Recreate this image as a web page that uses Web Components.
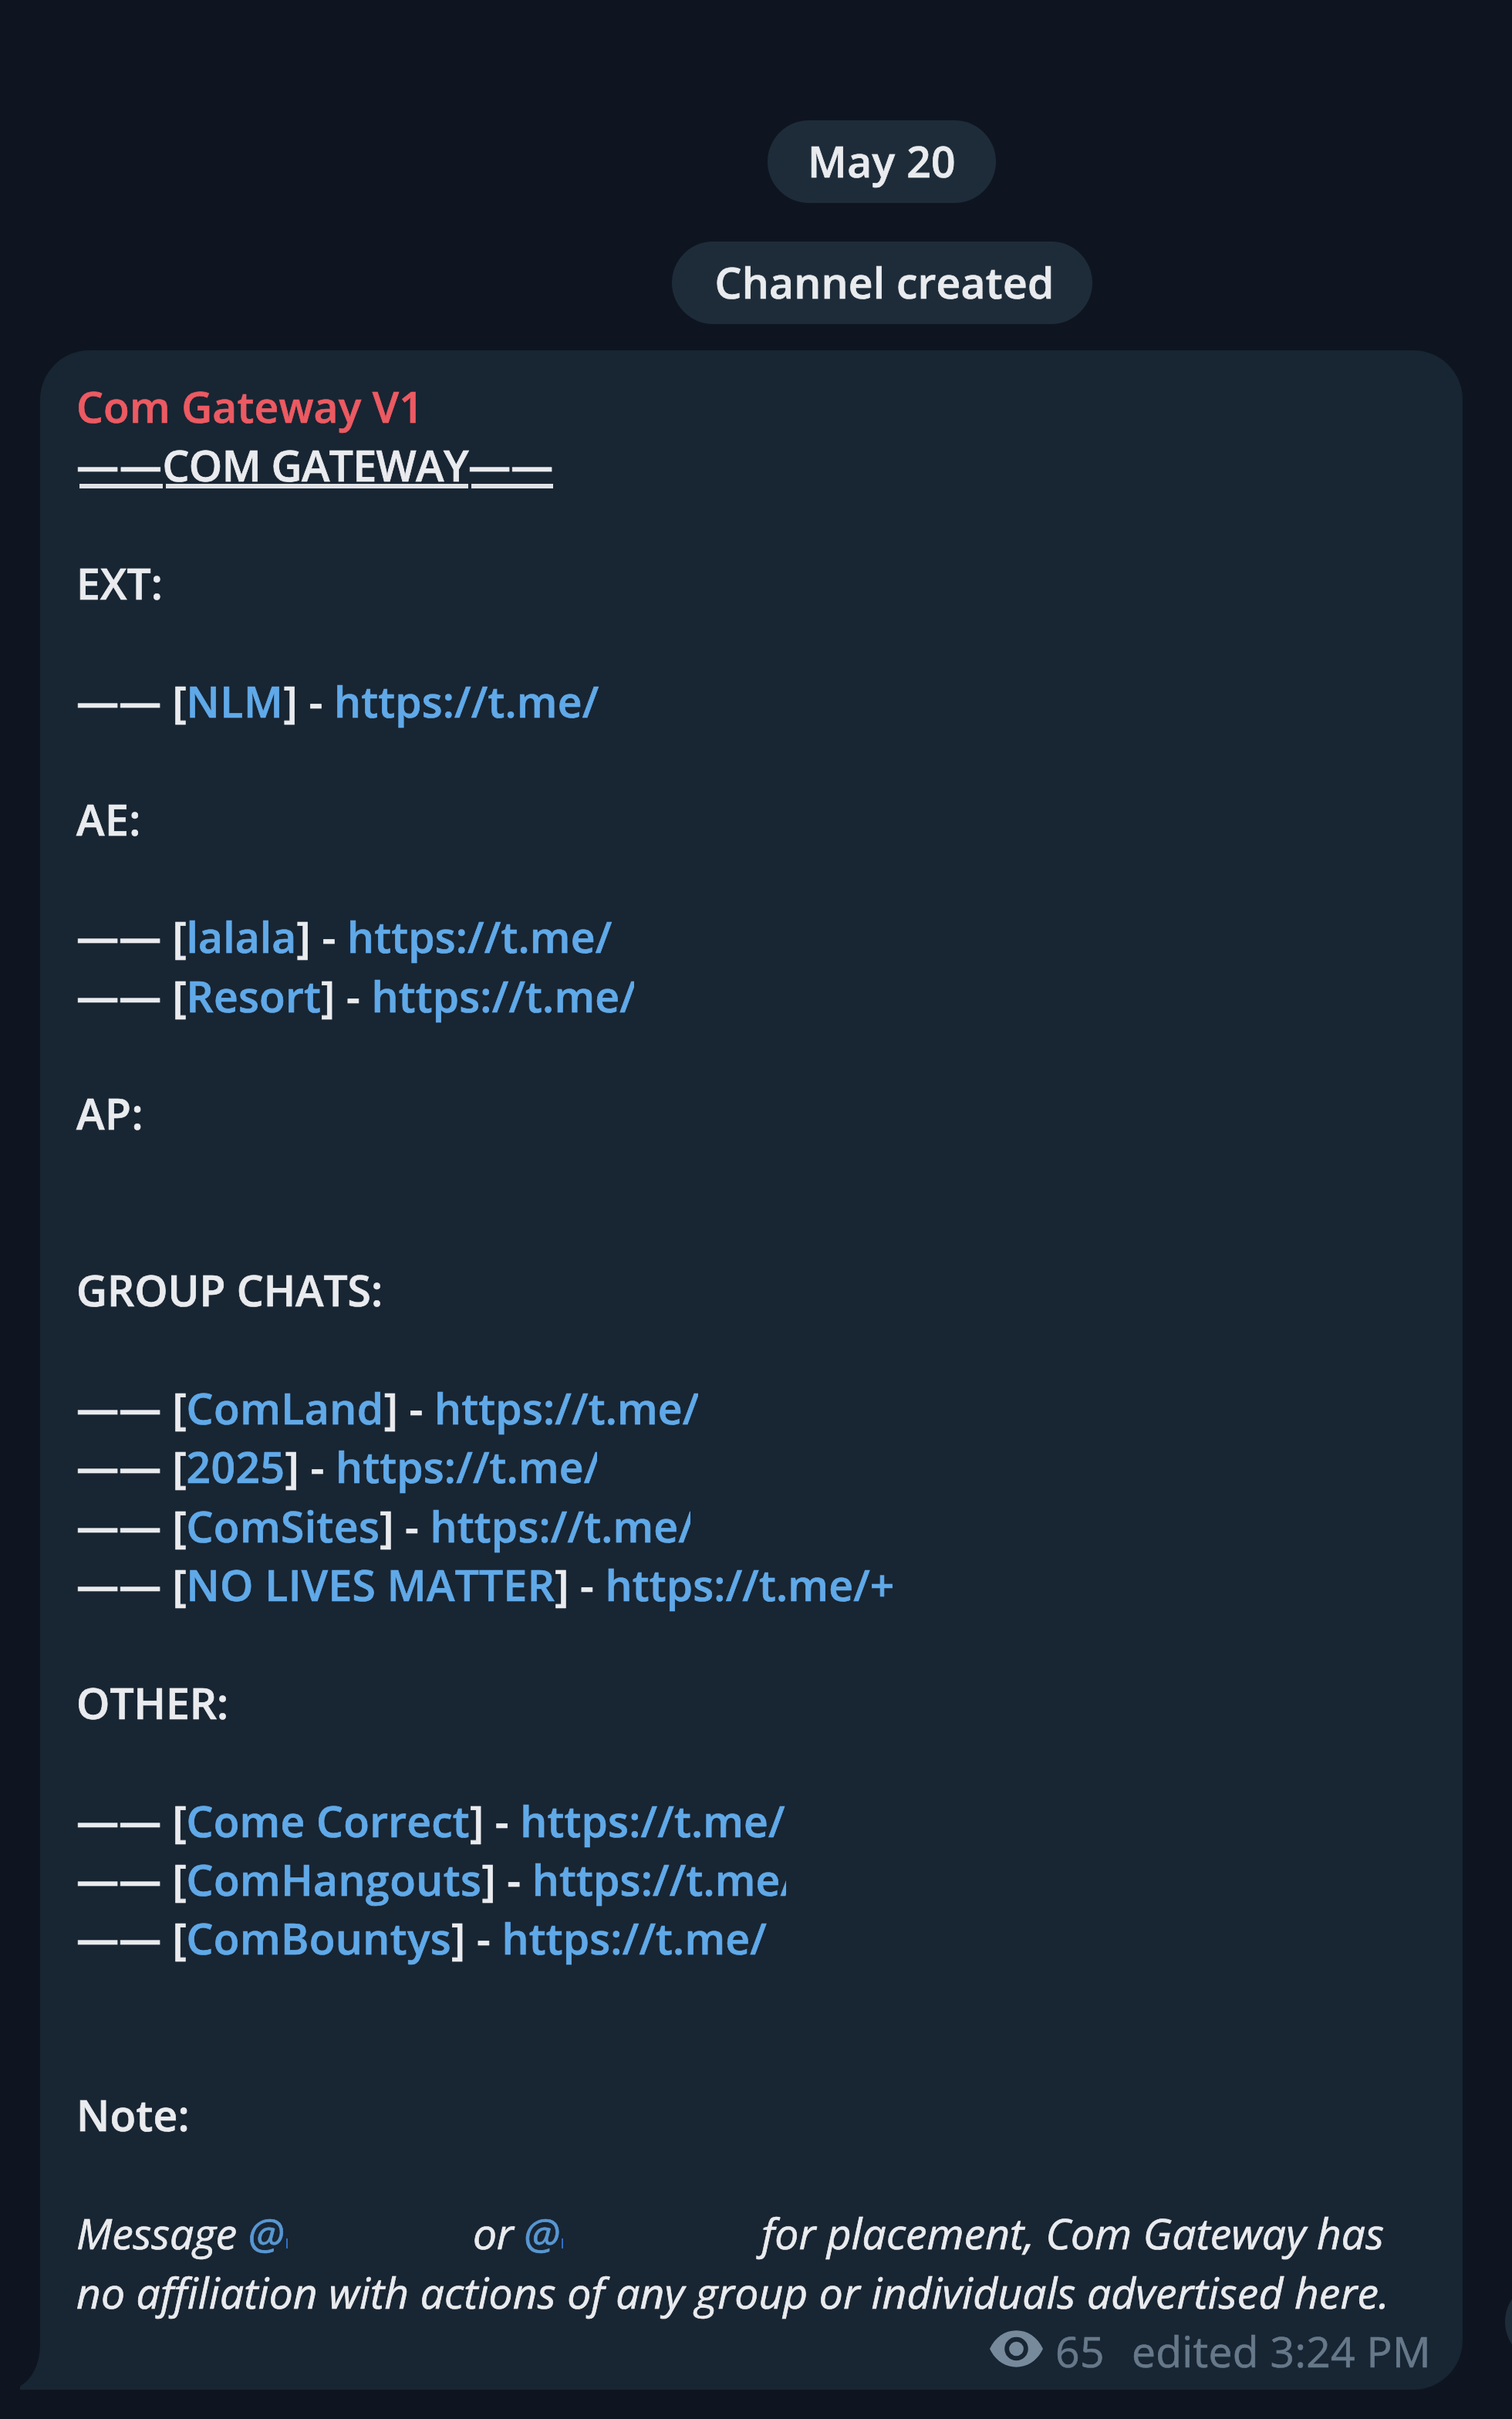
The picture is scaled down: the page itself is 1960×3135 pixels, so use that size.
<!DOCTYPE html>
<html lang="en">
<head>
<meta charset="utf-8">
<title>Com Gateway V1</title>
<style>
  html, body {
    margin: 0;
    background: #0e1520;
    overflow: hidden;
  }
</style>
</head>
<body>
<chat-view>
  <service-pill style="--pad-left: 52px; --pad-right: 52px"><text-run w="192">May 20</text-run></service-pill>
  <service-pill style="--pad-left: 56px; --pad-right: 49px"><text-run w="440">Channel created</text-run></service-pill>

  <message-bubble>
    <text-run slot="name" w="450">Com Gateway V1</text-run>

    <message-line>
      <text-run class="underline" w="111.5">——</text-run><text-run class="underline" w="396.5">COM GATEWAY</text-run><text-run class="underline" w="110">——</text-run>
    </message-line>
    <message-line></message-line>
    <message-line><text-run w="112">EXT:</text-run></message-line>
    <message-line></message-line>
    <link-line label="NLM" label-width="126" clip="344"></link-line>
    <message-line></message-line>
    <message-line><text-run w="84">AE:</text-run></message-line>
    <message-line></message-line>
    <link-line label="lalala" label-width="143" clip="344"></link-line>
    <link-line label="Resort" label-width="174.6" clip="340.3"></link-line>
    <message-line></message-line>
    <message-line><text-run w="87">AP:</text-run></message-line>
    <message-line></message-line>
    <message-line></message-line>
    <message-line><text-run w="397">GROUP CHATS:</text-run></message-line>
    <message-line></message-line>
    <link-line label="ComLand" label-width="256.2" clip="341.9"></link-line>
    <link-line label="2025" label-width="128.1" clip="339.5"></link-line>
    <link-line label="ComSites" label-width="250.7" clip="337.1"></link-line>
    <link-line label="NO LIVES MATTER" label-width="477.7" url="https://t.me/+" url-width="375" clip="375"></link-line>
    <message-line></message-line>
    <message-line><text-run w="197">OTHER:</text-run></message-line>
    <message-line></message-line>
    <link-line label="Come Correct" label-width="367.4" clip="344"></link-line>
    <link-line label="ComHangouts" label-width="382.9" clip="328.8"></link-line>
    <link-line label="ComBountys" label-width="343.6" clip="344.9"></link-line>
    <message-line></message-line>
    <message-line></message-line>
    <message-line><text-run w="147">Note:</text-run></message-line>
    <message-line></message-line>
    <message-line class="note">
      <text-run w="222.500">Message </text-run><text-run class="mention" w="51" style="margin-right: 240.500px">@</text-run><text-run w="66">or </text-run><text-run class="mention" w="51" style="margin-right: 257px">@</text-run><text-run w="807">for placement, Com Gateway has</text-run>
    </message-line>
    <message-line class="note"><text-run w="1702">no affiliation with actions of any group or individuals advertised here.</text-run></message-line>

    <message-meta slot="meta" views="65" time="edited 3:24 PM"></message-meta>
  </message-bubble>

  <share-button></share-button>
</chat-view>

<script>
// Inline piece of text, spaced out to the width given in "w"
class TextRun extends HTMLElement {
  constructor() {
    super();
    this.attachShadow({ mode: "open" }).innerHTML = `
      <style>
        :host {
          display: block;
          flex: none;
        }
        slot { white-space: pre; }
        :host(.underline) {
          background: linear-gradient(#dfe2e5, #dfe2e5) 4px 62px / 100% 6px no-repeat;
        }
        :host(.mention) {
          color: #5897d2;
          background: linear-gradient(#2f6fc4, #2f6fc4) right 45px / 2px 13px no-repeat;
        }
      </style>
      <slot></slot>
    `;
  }

  connectedCallback() {
    const target = parseFloat(this.getAttribute("w"));
    if (!target) return;
    const natural = this.getBoundingClientRect().width;
    const count = [...this.textContent].length;
    this.style.letterSpacing = (target - natural) / count + "px";
    this.style.width = target + "px";
  }
}

class MessageLine extends HTMLElement {
  constructor() {
    super();
    this.attachShadow({ mode: "open" }).innerHTML = `
      <style>
        :host {
          display: flex;
          height: var(--line);
        }
        :host(.note) {
          font-weight: 400;
          font-style: italic;
        }
      </style>
      <slot></slot>
    `;
  }
}

class LinkLine extends HTMLElement {
  constructor() {
    super();
    this.attachShadow({ mode: "open" });
  }

  connectedCallback() {
    const url = this.getAttribute("url") || "https://t.me/";
    this.shadowRoot.innerHTML = `
      <style>
        :host {
          display: flex;
          height: var(--line);
        }
        .link { color: #60a9e8; }
        .url {
          display: flex;
          width: ${this.getAttribute("clip")}px;
          overflow: hidden;
        }
      </style>
      <text-run w="142.5">—— [</text-run>
      <text-run class="link" w="${this.getAttribute("label-width")}">${this.getAttribute("label")}</text-run>
      <text-run w="65.4">] - </text-run>
      <div class="link url"><text-run w="${this.getAttribute("url-width") || 343.5}">${url}</text-run></div>
    `;
  }
}

class ServicePill extends HTMLElement {
  constructor() {
    super();
    this.attachShadow({ mode: "open" }).innerHTML = `
      <style>
        :host {
          display: flex;
          align-self: center;
          box-sizing: border-box;
          height: 107px;
          line-height: 105px;
          margin: 0 0 50px 326px;
          padding: 0 var(--pad-right) 0 var(--pad-left);
          border-radius: 54px;
          background: #1e2c3a;
        }
      </style>
      <slot></slot>
    `;
  }
}

class MessageMeta extends HTMLElement {
  constructor() {
    super();
    this.attachShadow({ mode: "open" });
  }

  connectedCallback() {
    this.shadowRoot.innerHTML = `
      <style>
        :host {
          display: flex;
          justify-content: flex-end;
          height: var(--line);
          font-weight: 400;
          color: #667889;
        }
        svg {
          width: 69px;
          height: 48px;
          margin: 11px 16px 0 0;
        }
        .views { margin-right: 35px; }
      </style>
      <svg viewBox="0 0 70 48">
        <path fill="#768a9c" fill-rule="evenodd" d="M35 0C20 0 7 9 0 24c7 15 20 24 35 24s28-9 35-24C63 9 50 0 35 0zM35 8.500a15.500 15.500 0 1 1 0 31a15.500 15.500 0 1 1 0-31z"/>
        <circle cx="35" cy="24" r="9.500" fill="#768a9c"/>
      </svg>
      <text-run class="views" w="64">${this.getAttribute("views")}</text-run>
      <text-run w="388">${this.getAttribute("time")}</text-run>
    `;
  }
}

class MessageBubble extends HTMLElement {
  constructor() {
    super();
    this.attachShadow({ mode: "open" }).innerHTML = `
      <style>
        :host {
          --line: 76.36px;
          display: flex;
          flex-direction: column;
          position: relative;
          box-sizing: border-box;
          width: 1844px;
          height: 2643px;
          margin: -16px 0 0 52px;
          padding: 35px 41px 0 47px;
          border-radius: 64px 64px 64px 0;
          background: #182533;
          line-height: var(--line);
        }
        .name {
          display: flex;
          height: var(--line);
          color: #ec5a62;
        }
        .tail {
          position: absolute;
          left: -26px;
          bottom: 0;
          width: 27px;
          height: 60px;
        }
      </style>
      <div class="name"><slot name="name"></slot></div>
      <slot></slot>
      <slot name="meta"></slot>
      <svg class="tail" viewBox="0 0 27 60">
        <path fill="#182533" d="M27 0H26C26 24 18 44 1 55Q-1 57 0 60H27z"/>
      </svg>
    `;
  }
}

// Round button that sits half outside of the window
class ShareButton extends HTMLElement {
  constructor() {
    super();
    this.attachShadow({ mode: "open" }).innerHTML = `
      <style>
        :host {
          position: absolute;
          left: 1950.5px;
          top: 2956px;
          width: 106px;
          height: 106px;
          border-radius: 50%;
          background: #1e2c3a;
        }
      </style>
    `;
  }
}

class ChatView extends HTMLElement {
  constructor() {
    super();
    this.attachShadow({ mode: "open" }).innerHTML = `
      <style>
        :host {
          display: flex;
          flex-direction: column;
          position: relative;
          box-sizing: border-box;
          width: 1960px;
          height: 3135px;
          padding-top: 156px;
          overflow: hidden;
          background: #0e1520;
          color: #e9ebee;
          font: 600 55.2px "Open Sans", "Noto Sans", sans-serif;
          -webkit-text-stroke: 0.7px;
        }
      </style>
      <slot></slot>
    `;
  }
}

// containers first, so the runs are measured in their final font
customElements.define("chat-view", ChatView);
customElements.define("service-pill", ServicePill);
customElements.define("message-bubble", MessageBubble);
customElements.define("message-line", MessageLine);
customElements.define("link-line", LinkLine);
customElements.define("message-meta", MessageMeta);
customElements.define("share-button", ShareButton);
customElements.define("text-run", TextRun);
</script>
</body>
</html>
